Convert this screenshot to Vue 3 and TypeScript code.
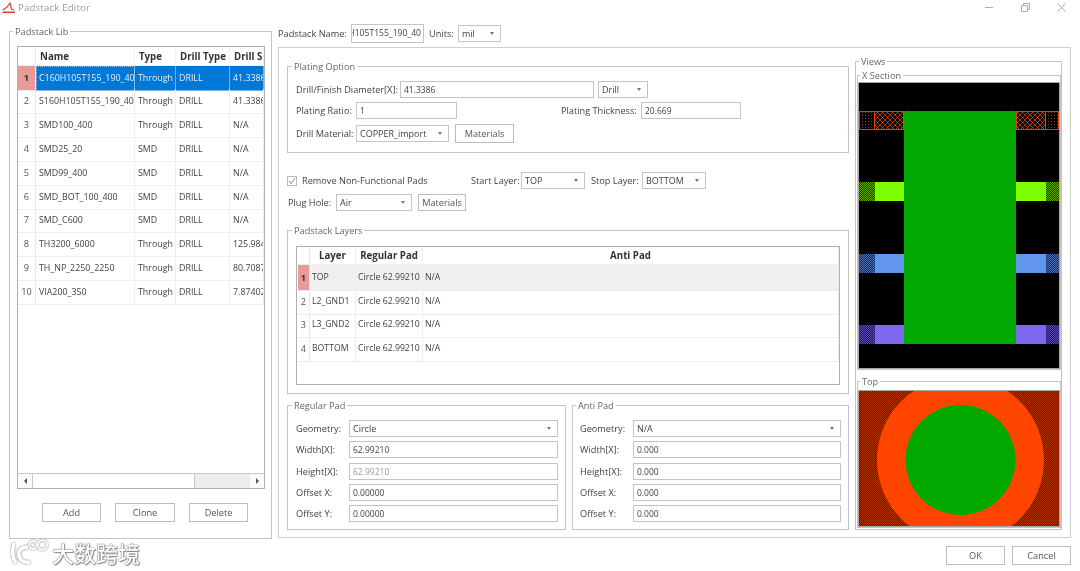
<script setup lang="ts">
interface LibRow { name: string; type: string; drill: string; size: string }
const libRows: LibRow[] = [
  { name: 'C160H105T155_190_40', type: 'Through', drill: 'DRILL', size: '41.3386' },
  { name: 'S160H105T155_190_40', type: 'Through', drill: 'DRILL', size: '41.3386' },
  { name: 'SMD100_400', type: 'Through', drill: 'DRILL', size: 'N/A' },
  { name: 'SMD25_20', type: 'SMD', drill: 'DRILL', size: 'N/A' },
  { name: 'SMD99_400', type: 'SMD', drill: 'DRILL', size: 'N/A' },
  { name: 'SMD_BOT_100_400', type: 'SMD', drill: 'DRILL', size: 'N/A' },
  { name: 'SMD_C600', type: 'SMD', drill: 'DRILL', size: 'N/A' },
  { name: 'TH3200_6000', type: 'Through', drill: 'DRILL', size: '125.984' },
  { name: 'TH_NP_2250_2250', type: 'Through', drill: 'DRILL', size: '80.7087' },
  { name: 'VIA200_350', type: 'Through', drill: 'DRILL', size: '7.87402' }
]
const layers = ['TOP', 'L2_GND1', 'L3_GND2', 'BOTTOM']
const regular = [
  { label: 'Width[X]:', value: '62.99210', dim: false },
  { label: 'Height[X]:', value: '62.99210', dim: true },
  { label: 'Offset X:', value: '0.00000', dim: false },
  { label: 'Offset Y:', value: '0.00000', dim: false }
]
const anti = [
  { label: 'Width[X]:', value: '0.000', dim: false },
  { label: 'Height[X]:', value: '0.000', dim: false },
  { label: 'Offset X:', value: '0.000', dim: false },
  { label: 'Offset Y:', value: '0.000', dim: false }
]
const bands = [
  { y: 182, fill: '#80ff00', dots: 'url(#dotsLime)' },
  { y: 254, fill: '#6495ed', dots: 'url(#dotsBlue)' },
  { y: 325, fill: '#7b68ee', dots: 'url(#dotsViolet)' }
]
</script>

<template>
  <div class="window">
    <div class="titlebar">
      <svg class="appicon" width="13" height="13" viewBox="0 0 13 13">
        <path d="M1 9 L5 6 L8 2 L9.5 8 L12 9" fill="none" stroke="#d9432f" stroke-width="1.2" />
        <path d="M0.5 11.3 H13" stroke="#d9432f" stroke-width="1.6" />
      </svg>
      <span class="title">Padstack Editor</span>
      <div class="controls">
        <svg width="9" height="9" viewBox="0 0 9 9"><path d="M0 4.5 H8" stroke="#aaa" /></svg>
        <svg width="9" height="9" viewBox="0 0 9 9"><path d="M.5 2.5 H6.5 V8.5 H.5 Z M2.5 2.5 V.5 H8.5 V6.5 H6.5" fill="none" stroke="#aaa" /></svg>
        <svg width="9" height="9" viewBox="0 0 9 9"><path d="M.5 .5 L8.5 8.5 M8.5 .5 L.5 8.5" stroke="#aaa" /></svg>
      </div>
    </div>

    <div class="content">
      <fieldset class="group lib">
        <legend>Padstack Lib</legend>
        <div class="libtable">
          <div class="librows">
            <div class="librow head">
              <div class="rowno"></div>
              <div class="cell">Name</div>
              <div class="cell">Type</div>
              <div class="cell">Drill Type</div>
              <div class="cell">Drill S</div>
            </div>
            <div v-for="(r, i) in libRows" :key="r.name" class="librow" :class="{ sel: i === 0 }">
              <div class="rowno">{{ i + 1 }}</div>
              <div class="cell first">{{ r.name }}</div>
              <div class="cell">{{ r.type }}</div>
              <div class="cell">{{ r.drill }}</div>
              <div class="cell">{{ r.size }}</div>
            </div>
          </div>
          <div class="hscroll">
            <span class="sbtn"><i class="tri-l"></i></span>
            <span class="thumb"></span>
            <span class="rest"></span>
            <span class="sbtn"><i class="tri-r"></i></span>
          </div>
        </div>
        <div class="libbtns">
          <div class="btn b59">Add</div>
          <div class="btn b60">Clone</div>
          <div class="btn b59">Delete</div>
        </div>
      </fieldset>

      <div class="rightcol">
        <div class="namerow">
          <span class="lbl w73">Padstack Name:</span>
          <div class="field namefield"><span>C160H105T155_190_40</span></div>
          <span class="lbl w34">Units:</span>
          <div class="field combo w43">mil<i class="arrow"></i></div>
        </div>

        <div class="panel">
          <div class="leftpane">
            <fieldset class="group plating">
              <legend>Plating Option</legend>
              <div class="row r1">
                <span class="lbl w104">Drill/Finish Diameter[X]:</span>
                <div class="field num w194">41.3386</div>
                <div class="field combo w50 ml4">Drill<i class="arrow"></i></div>
              </div>
              <div class="row r2">
                <span class="lbl w60">Plating Ratio:</span>
                <div class="field num w101">1</div>
                <span class="lbl w80 ml104">Plating Thickness:</span>
                <div class="field num w100">20.669</div>
              </div>
              <div class="row r3">
                <span class="lbl w60">Drill Material:</span>
                <div class="field combo w93">COPPER_import<i class="arrow"></i></div>
                <div class="btn w59 ml6">Materials</div>
              </div>
            </fieldset>

            <div class="row removerow">
              <span class="check">
                <svg width="8" height="8" viewBox="0 0 8 8"><path d="M1 4 L3 6.5 L7 1" fill="none" stroke="#888" /></svg>
              </span>
              <span class="lbl w169">Remove Non-Functional Pads</span>
              <span class="lbl w50">Start Layer:</span>
              <div class="field combo w64">TOP<i class="arrow"></i></div>
              <span class="lbl w51 ml6">Stop Layer:</span>
              <div class="field combo w64">BOTTOM<i class="arrow"></i></div>
            </div>

            <div class="row plugrow">
              <span class="lbl w48">Plug Hole:</span>
              <div class="field combo w76">Air<i class="arrow"></i></div>
              <div class="btn w48 ml6">Materials</div>
            </div>

            <fieldset class="group layersgroup">
              <legend>Padstack Layers</legend>
              <div class="layertable">
                <div class="layerrow head">
                  <div class="rowno"></div>
                  <div class="cell center">Layer</div>
                  <div class="cell center">Regular Pad</div>
                  <div class="cell center">Anti Pad</div>
                </div>
                <div v-for="(l, i) in layers" :key="l" class="layerrow" :class="{ cur: i === 0 }">
                  <div class="rowno">{{ i + 1 }}</div>
                  <div class="cell">{{ l }}</div>
                  <div class="cell">Circle 62.99210</div>
                  <div class="cell">N/A</div>
                </div>
              </div>
            </fieldset>

            <div class="padrow">
              <fieldset class="group pad regular">
                <legend>Regular Pad</legend>
                <div class="padform">
                  <div class="row">
                    <span class="lbl w53">Geometry:</span>
                    <div class="field combo grow">Circle<i class="arrow"></i></div>
                  </div>
                  <div v-for="f in regular" :key="f.label" class="row">
                    <span class="lbl w53">{{ f.label }}</span>
                    <div class="field num grow" :class="{ dim: f.dim }">{{ f.value }}</div>
                  </div>
                </div>
              </fieldset>
              <fieldset class="group pad antipad">
                <legend>Anti Pad</legend>
                <div class="padform">
                  <div class="row">
                    <span class="lbl w53">Geometry:</span>
                    <div class="field combo grow">N/A<i class="arrow"></i></div>
                  </div>
                  <div v-for="f in anti" :key="f.label" class="row">
                    <span class="lbl w53">{{ f.label }}</span>
                    <div class="field num grow">{{ f.value }}</div>
                  </div>
                </div>
              </fieldset>
            </div>
          </div>

          <fieldset class="group views">
            <legend>Views</legend>
            <fieldset class="group sub xsec">
              <legend>X Section</legend>
              <svg class="canvas" width="200" height="285" viewBox="859 83 200 285">
                <defs>
                  <pattern id="hatch" width="5" height="5" patternUnits="userSpaceOnUse">
                    <rect width="5" height="5" fill="#000" />
                    <path d="M0 0 L5 5 M5 0 L0 5" stroke="#f04808" stroke-width=".7" />
                  </pattern>
                  <pattern id="dotsRed" width="3" height="3" patternUnits="userSpaceOnUse">
                    <rect x="1" y="1" width="1" height="1" fill="#8c2c08" />
                  </pattern>
                  <pattern id="dotsLime" width="2" height="2" patternUnits="userSpaceOnUse">
                    <rect width="2" height="2" fill="#1e3c00" />
                    <rect width="1" height="1" fill="#5fa800" />
                    <rect x="1" y="1" width="1" height="1" fill="#5fa800" />
                  </pattern>
                  <pattern id="dotsBlue" width="2" height="2" patternUnits="userSpaceOnUse">
                    <rect width="2" height="2" fill="#1a2a50" />
                    <rect width="1" height="1" fill="#4a6eb0" />
                    <rect x="1" y="1" width="1" height="1" fill="#4a6eb0" />
                  </pattern>
                  <pattern id="dotsViolet" width="2" height="2" patternUnits="userSpaceOnUse">
                    <rect width="2" height="2" fill="#1e1a50" />
                    <rect width="1" height="1" fill="#5a4ab0" />
                    <rect x="1" y="1" width="1" height="1" fill="#5a4ab0" />
                  </pattern>
                </defs>
                <rect x="859" y="83" width="200" height="285" fill="#000" />
                <rect x="904" y="111" width="112" height="233" fill="#00a800" />
                <g fill="none" stroke="#e0400c">
                  <rect x="859.5" y="111.5" width="15" height="18" fill="url(#dotsRed)" />
                  <rect x="874.5" y="111.5" width="29" height="18" fill="url(#hatch)" />
                  <rect x="1016.5" y="111.5" width="29" height="18" fill="url(#hatch)" />
                  <rect x="1045.5" y="111.5" width="13" height="18" fill="url(#dotsRed)" />
                </g>
                <g v-for="b in bands" :key="b.y">
                  <rect x="859" :y="b.y" width="16" height="19" :fill="b.dots" />
                  <rect x="875" :y="b.y" width="29" height="19" :fill="b.fill" />
                  <rect x="1016" :y="b.y" width="30" height="19" :fill="b.fill" />
                  <rect x="1046" :y="b.y" width="13" height="19" :fill="b.dots" />
                </g>
              </svg>
            </fieldset>
            <fieldset class="group sub topview">
              <legend>Top</legend>
              <svg class="canvas" width="200" height="135" viewBox="859 391 200 135">
                <defs>
                  <pattern id="dotsTop" width="2" height="2" patternUnits="userSpaceOnUse">
                    <rect width="2" height="2" fill="#5a1a00" />
                    <rect width="1" height="1" fill="#b03800" />
                    <rect x="1" y="1" width="1" height="1" fill="#b03800" />
                  </pattern>
                </defs>
                <rect x="859" y="391" width="200" height="135" fill="url(#dotsTop)" />
                <circle cx="960.5" cy="460" r="83.5" fill="#ff4500" />
                <circle cx="960.5" cy="460" r="55" fill="#00a800" />
              </svg>
            </fieldset>
          </fieldset>
        </div>
      </div>
    </div>

    <div class="footer">
      <div class="btn b59">OK</div>
      <div class="btn b59">Cancel</div>
    </div>

    <div class="watermark">
      <svg width="40" height="26" viewBox="0 0 40 26">
        <g fill="none" stroke="#fff" stroke-width="3.4" class="mark">
          <path d="M4 4 C2 10 2 18 6 24" />
          <path d="M18 8 C11 8 8 12 9 16 C10 22 15 24 20 23" />
          <circle cx="23" cy="6" r="3.8" stroke-width="1.8" />
          <circle cx="32.5" cy="6" r="4.6" stroke-width="1.8" />
        </g>
      </svg>
      <span class="wmtext">大数跨境</span>
    </div>
  </div>
</template>

<style>
html, body { margin: 0; background: #fff; }
</style>

<style scoped>
.window {
  position: relative;
  width: 1080px;
  height: 571px;
  background: #fff;
  overflow: hidden;
  font-family: "Open Sans", "Noto Sans", sans-serif;
  font-size: 9.2px;
  line-height: 13px;
  color: #424242;
  display: flex;
  flex-direction: column;
  box-sizing: border-box;
  filter: blur(.3px);
}
.titlebar {
  height: 15px;
  display: flex;
  align-items: center;
  padding-left: 2px;
}
.appicon { flex: none; }
.title { margin-left: 3px; color: #9a9a9a; font-size: 9.6px; letter-spacing: .2px; }
.controls {
  margin-left: auto;
  margin-right: 14px;
  display: flex;
  gap: 27px;
}
.content {
  display: flex;
  padding-left: 9px;
  gap: 6px;
  height: 523px;
}
fieldset.group {
  margin: 0;
  min-width: 0;
  box-sizing: border-box;
  border: 1px solid #c4c4c4;
  flex: none;
}
legend {
  padding: 0 2px;
  line-height: 13px;
  color: #666;
}
.lib {
  width: 263px;
  height: 514px;
  margin-top: 10px !important;
  padding: 8px 0 0 7px;
}
.lib legend { margin-left: -3px; }
.libtable {
  width: 248px;
  height: 443px;
  box-sizing: border-box;
  border: 1px solid #b0b0b0;
  display: flex;
  flex-direction: column;
}
.librows { flex: 1; overflow: hidden; }
.librow {
  display: grid;
  grid-template-columns: 18px 99px 41px 54px 1fr;
  height: 23.8px;
  line-height: 24px;
}
.librow.head { height: 18.6px; line-height: 19px; }
.librow .rowno, .layerrow .rowno {
  text-align: center;
  color: #555;
  border-right: 1px solid #e8e8e8;
  border-bottom: 1px solid #eee;
  box-sizing: border-box;
}
.cell {
  padding-left: 3px;
  font-size: 8.85px;
  white-space: nowrap;
  overflow: hidden;
  border-right: 1px solid #eee;
  border-bottom: 1px solid #eee;
  box-sizing: border-box;
}
.head .cell { font-size: 9.7px; font-weight: 700; color: #333; }
.librow.head .cell { padding-left: 4px; border-color: #f0f0f0; }
.librow.sel .cell { background: #0078d7; color: #e6f0fa; border-color: #79b2e6; }
.librow.sel .cell.first { outline: 1px dotted #9cc8ee; outline-offset: -1px; }
.librow.sel .rowno { background: #e89a9a; font-weight: 700; color: #333; }
.hscroll {
  height: 14px;
  flex: none;
  display: flex;
  background: #f0f0f0;
  border-top: 1px solid #c8c8c8;
}
.sbtn {
  width: 14px;
  flex: none;
  display: flex;
  align-items: center;
  justify-content: center;
  background: #fafafa;
}
.thumb { width: 163px; background: #fff; border: solid #c8c8c8; border-width: 0 1px; box-sizing: border-box; }
.rest { flex: 1; background: #ececec; }
.tri-l, .tri-r { width: 0; height: 0; border: 3px solid transparent; }
.tri-l { border-right-color: #555; margin-left: -3px; }
.tri-r { border-left-color: #555; margin-right: -3px; }
.libbtns {
  display: flex;
  margin-top: 14px;
  padding-left: 25px;
  gap: 14px;
}
.btn {
  height: 19px;
  box-sizing: border-box;
  border: 1px solid #bcbcbc;
  background: #fff;
  display: flex;
  align-items: center;
  justify-content: center;
  color: #555;
  flex: none;
}
.b59 { width: 59px; }
.b60 { width: 60px; }
.rightcol { width: 793px; flex: none; }
.namerow {
  display: flex;
  align-items: center;
  height: 19px;
  margin-top: 9px;
}
.lbl { white-space: nowrap; flex: none; }
.field {
  box-sizing: border-box;
  height: 17px;
  border: 1px solid #c4c4c4;
  background: #fff;
  padding-left: 3px;
  font-size: 9px;
  line-height: 15px;
  white-space: nowrap;
  overflow: hidden;
  position: relative;
  flex: none;
}
.field.num { font-size: 8.5px; }
.namefield {
  width: 73px;
  height: 19px;
  line-height: 17px;
  font-size: 8.6px;
  display: flex;
  justify-content: flex-end;
  padding-right: 2px;
  padding-left: 0;
}
.namefield span { flex: none; }
.combo { height: 17px; }
.arrow {
  position: absolute;
  right: 6px;
  top: 6px;
  width: 0;
  height: 0;
  border: 2px solid transparent;
  border-top: 3px solid #777;
  border-bottom: 0;
}
.w73 { width: 73px; }
.w34 { width: 29px; margin-left: 5px; }
.w43 { width: 43px; height: 17px; }
.w104 { width: 104px; }
.w194 { width: 194px; }
.w50 { width: 50px; }
.w60 { width: 60px; }
.w101 { width: 101px; }
.w80 { width: 80px; }
.w100 { width: 100px; }
.w93 { width: 93px; }
.w59 { width: 59px; }
.w169 { width: 169px; }
.w64 { width: 64px; }
.w51 { width: 51px; }
.w48 { width: 48px; }
.w76 { width: 76px; }
.w53 { width: 53px; }
.ml4 { margin-left: 4px; }
.ml6 { margin-left: 6px; }
.ml104 { margin-left: 104px; }
.grow { flex: 1; }
.dim { color: #9a9a9a; }
.panel {
  margin-top: 4px;
  height: 491px;
  box-sizing: border-box;
  border: 1px solid #cfcfcf;
  padding-left: 8px;
  display: flex;
  gap: 6px;
}
.leftpane { width: 562px; flex: none; }
.row { display: flex; align-items: center; }
.plating {
  width: 562px;
  height: 93px;
  margin-top: 12px !important;
  padding: 8px 8px 0;
}
.group legend { margin-left: -4px; }
.r2 { margin-top: 4px; }
.r3 { margin-top: 5px; height: 19px; }
.removerow { margin-top: 19px; height: 17px; }
.check {
  width: 10px;
  height: 10px;
  box-sizing: border-box;
  border: 1px solid #bbb;
  margin-right: 5px;
  display: flex;
  align-items: center;
  justify-content: center;
  flex: none;
}
.plugrow { margin-top: 5px; height: 17px; padding-left: 1px; }
.plugrow .btn { height: 17px; }
.layersgroup {
  width: 562px;
  height: 170px;
  margin-top: 13px !important;
  padding: 9px 8px 0;
}
.layertable {
  width: 544px;
  height: 139px;
  box-sizing: border-box;
  border: 1px solid #b0b0b0;
  padding-left: 1px;
  overflow: hidden;
}
.layerrow {
  display: grid;
  grid-template-columns: 12px 46px 67px 1fr;
  height: 23.7px;
  line-height: 25px;
}
.layerrow .cell { padding-left: 2px; font-size: 8.7px; }
.layerrow.head { height: 18px; line-height: 18px; }
.layerrow.head .cell { font-size: 9.7px; padding-left: 0; }
.center { text-align: center; }
.layerrow.cur .cell { background: #f0f0f0; }
.layerrow.cur .rowno { background: #e89a9a; font-weight: 700; color: #333; }
.padrow { display: flex; gap: 6px; margin-top: 5px; }
.pad {
  height: 131px;
  padding: 8px 7px 0 8px;
}
.antipad { padding-left: 7px; }
.regular { width: 279px; }
.antipad { width: 277px; }
.padform { display: flex; flex-direction: column; gap: 4.25px; }
.views {
  width: 207px;
  height: 475px;
  margin-top: 7px !important;
  padding: 1px 1px 0;
}
.views legend { margin-left: 2px; }
.sub { width: 204px; padding: 1px 1px 0; }
.sub legend { margin-left: 1px; }
.xsec { height: 301px; }
.topview { height: 153px; margin-top: 5px !important; padding-top: 3px; }
.canvas { display: block; outline: 1px solid #a8a8a8; }
.footer {
  display: flex;
  justify-content: flex-end;
  gap: 7px;
  padding-right: 9px;
  margin-top: 8px;
}
.watermark {
  position: absolute;
  left: 10px;
  top: 539px;
  display: flex;
  align-items: center;
  gap: 2px;
  height: 26px;
}
.mark { filter: drop-shadow(0 0 1px #777); }
.wmtext {
  font-family: "Noto Sans CJK SC", sans-serif;
  font-size: 22px;
  line-height: 26px;
  font-weight: 500;
  color: #fff;
  text-shadow: 0 0 1px #555, 0 0 1px #555, 1px 1px 1px #999;
}
</style>
